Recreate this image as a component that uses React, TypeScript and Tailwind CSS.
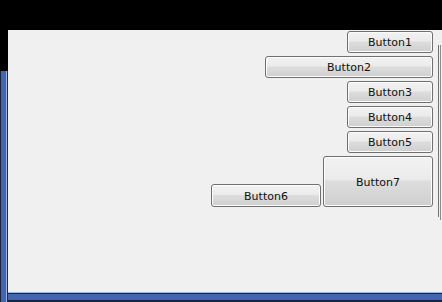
import React from "react";

function Btn({ label, w, h = 22 }: { label: string; w: number; h?: number }) {
  return (
    <div
      className="relative flex items-center justify-center rounded-[3px] border border-[#707070] text-[11px] text-[#111] bg-[linear-gradient(to_bottom,#f2f2f2_0%,#ebebeb_45%,#dddddd_50%,#cfcfcf_100%)] shadow-[inset_0_0_0_1px_#fcfcfc]"
      style={{ width: w, height: h, fontFamily: '"DejaVu Sans", sans-serif' }}
    >
      <span className="leading-none mt-[1px]">{label}</span>
    </div>
  );
}

export default function App() {
  return (
    <div className="w-[442px] h-[302px] bg-black flex flex-col overflow-hidden">
      <div className="h-[30px] shrink-0" />
      <div className="flex flex-1 min-h-0">
        <div className="w-[8px] flex flex-col shrink-0">
          <div className="h-[41px] shrink-0" />
          <div className="flex-1 flex">
            <div className="w-[1px] bg-[#1a2340]" />
            <div className="w-[5px] bg-[#4265ad]" />
            <div className="w-[1px] bg-[#9fb4dc]" />
            <div className="w-[1px] bg-[#1a2a50]" />
          </div>
        </div>
        <div className="flex-1 flex flex-col">
          <div className="flex-1 bg-[#f0f0f0] flex">
            <div className="flex-1 flex flex-col items-end gap-[3px] pt-[1px] pr-[1px]">
              <Btn label="Button1" w={86} />
              <Btn label="Button2" w={168} />
              <Btn label="Button3" w={86} />
              <Btn label="Button4" w={86} />
              <Btn label="Button5" w={86} />
              <div className="flex items-end gap-[2px]">
                <Btn label="Button6" w={110} h={23} />
                <Btn label="Button7" w={110} h={51} />
              </div>
            </div>
            <div className="w-[8px] flex pt-[15px] gap-[1px] pl-[4px]">
              <div className="w-[1px] h-[172px] bg-[#707070]" />
              <div className="w-[1px] h-[175px] bg-[#8a8a8a]" />
            </div>
          </div>
          <div className="h-[1px] bg-[#9fb4dc]" />
          <div className="h-[1px] bg-[#1a2a50]" />
          <div className="h-[6px] bg-[#4265ad]" />
          <div className="h-[2px] bg-[#1a2340]" />
        </div>
      </div>
    </div>
  );
}
